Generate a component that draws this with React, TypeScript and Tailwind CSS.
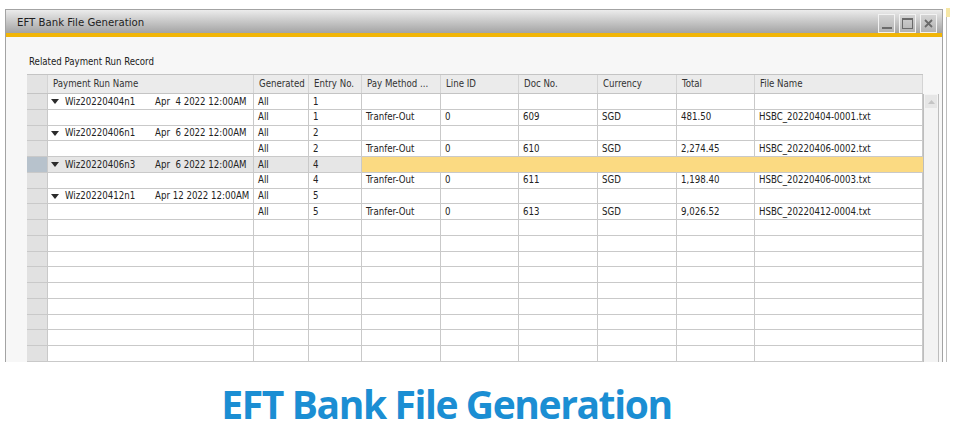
import { clsx } from 'clsx'

type Row = {
  group?: boolean
  name?: string
  date?: string
  gen: string
  entry: string
  method?: string
  line?: string
  doc?: string
  cur?: string
  total?: string
  file?: string
  active?: boolean
}

const ROWS: Row[] = [
  { group: true, name: 'Wiz20220404n1', date: 'Apr  4 2022 12:00AM', gen: 'All', entry: '1' },
  { gen: 'All', entry: '1', method: 'Tranfer-Out', line: '0', doc: '609', cur: 'SGD', total: '481.50', file: 'HSBC_20220404-0001.txt' },
  { group: true, name: 'Wiz20220406n1', date: 'Apr  6 2022 12:00AM', gen: 'All', entry: '2' },
  { gen: 'All', entry: '2', method: 'Tranfer-Out', line: '0', doc: '610', cur: 'SGD', total: '2,274.45', file: 'HSBC_20220406-0002.txt' },
  { group: true, name: 'Wiz20220406n3', date: 'Apr  6 2022 12:00AM', gen: 'All', entry: '4', active: true },
  { gen: 'All', entry: '4', method: 'Tranfer-Out', line: '0', doc: '611', cur: 'SGD', total: '1,198.40', file: 'HSBC_20220406-0003.txt' },
  { group: true, name: 'Wiz20220412n1', date: 'Apr 12 2022 12:00AM', gen: 'All', entry: '5' },
  { gen: 'All', entry: '5', method: 'Tranfer-Out', line: '0', doc: '613', cur: 'SGD', total: '9,026.52', file: 'HSBC_20220412-0004.txt' },
]

const EMPTY_ROWS = 9

function Caret() {
  return (
    <svg width="8" height="5" viewBox="0 0 8 5" className="shrink-0">
      <polygon points="0,0 8,0 4,5" fill="#2b2b2b" />
    </svg>
  )
}

function Cell({ w, children, tone = 'white' }: { w: string; children?: React.ReactNode; tone?: 'white' | 'gray' | 'yellow' }) {
  return (
    <div
      className={clsx(
        'h-full flex items-center pl-[4px] pt-[1px] border-r overflow-hidden whitespace-pre shrink-0',
        w,
        tone === 'white' && 'bg-white border-[#c9c9c9]',
        tone === 'gray' && 'bg-[#e6e6e6] border-[#c9c9c9]',
        tone === 'yellow' && 'bg-[#fbda82] border-[#fbda82]'
      )}
    >
      {children}
    </div>
  )
}

function DataRow({ row }: { row?: Row }) {
  const act = row?.active
  const soft = act ? 'gray' : 'white'
  const rest = act ? 'yellow' : 'white'
  return (
    <div className="flex h-[15.75px] border-b border-[#c9c9c9]">
      <div className={clsx('w-[21px] h-full shrink-0 border-r border-[#c9c9c9]', act ? 'bg-[#b7c2cc]' : 'bg-[#e1e1e1]')} />
      <Cell w="w-[206px]" tone={soft}>
        {row?.group && (
          <div className="flex items-center -ml-[1px]">
            <Caret />
            <span className="ml-[6px] w-[90px]">{row.name}</span>
            <span>{row.date}</span>
          </div>
        )}
      </Cell>
      <Cell w="w-[55px]" tone={soft}>{row?.gen}</Cell>
      <Cell w="w-[53px]" tone={soft}>{row?.entry}</Cell>
      <Cell w="w-[79px]" tone={rest}>{row?.method}</Cell>
      <Cell w="w-[78px]" tone={rest}>{row?.line}</Cell>
      <Cell w="w-[79px]" tone={rest}>{row?.doc}</Cell>
      <Cell w="w-[79px]" tone={rest}>{row?.cur}</Cell>
      <Cell w="w-[78px]" tone={rest}>{row?.total}</Cell>
      <Cell w="w-[168px]" tone={rest}>{row?.file}</Cell>
    </div>
  )
}

const HEADERS: [string, string][] = [
  ['Payment Run Name', 'w-[206px]'],
  ['Generated', 'w-[55px]'],
  ['Entry No.', 'w-[53px]'],
  ['Pay Method ...', 'w-[79px]'],
  ['Line ID', 'w-[78px]'],
  ['Doc No.', 'w-[79px]'],
  ['Currency', 'w-[79px]'],
  ['Total', 'w-[78px]'],
  ['File Name', 'w-[168px]'],
]

function WinButton({ children }: { children: React.ReactNode }) {
  return (
    <div className="w-[17px] h-[19px] border border-[#f2f2f2] bg-gradient-to-b from-[#d4d4d4] to-[#b2b2b2] flex items-center justify-center">
      {children}
    </div>
  )
}

export default function App() {
  return (
    <div className="w-[957px] h-[442px] bg-white overflow-hidden font-['DejaVu_Sans_Condensed','DejaVu_Sans',sans-serif] text-[#222]">
      <div className="flex pt-[8px]">
        <div className="ml-[5px] mt-[1px] w-[938px] h-[353px] border-l border-t border-r border-[#a3a3a3] flex flex-col">
          {/* title bar */}
          <div className="h-[23px] bg-gradient-to-b from-[#ececec] to-[#a4a4a4] flex items-center justify-between pl-[11px] pr-[5px]">
            <span className="text-[11.3px] text-[#1e1e1e] mt-[4px]">EFT Bank File Generation</span>
            <div className="flex gap-[4px] mt-[3px]">
              <WinButton>
                <div className="w-[10px] h-[2px] bg-[#6a6a6a] mt-[10px]" />
              </WinButton>
              <WinButton>
                <div className="w-[11px] h-[11px] border border-[#6a6a6a] border-t-2" />
              </WinButton>
              <WinButton>
                <svg width="9" height="9" viewBox="0 0 9 9">
                  <path d="M1 1 L8 8 M8 1 L1 8" stroke="#6a6a6a" strokeWidth="1.8" />
                </svg>
              </WinButton>
            </div>
          </div>
          <div className="h-[4px] bg-[#f1b507]" />

          {/* body */}
          <div className="flex-1 bg-[#f7f7f7] pl-[21px] min-h-0 overflow-hidden">
            <div className="h-[37px] pt-[18px] pl-[2px] text-[9.6px]">Related Payment Run Record</div>
            <div className="flex text-[9.6px]">
              <div className="w-[896px] shrink-0">
                <div className="flex h-[20px] border-t border-b border-[#c4c4c4] bg-[#ebebeb]">
                  <div className="w-[21px] h-full border-r border-[#d4d4d4] bg-[#e3e3e3]" />
                  {HEADERS.map(([label, w]) => (
                    <div key={label} className={clsx('h-full flex items-center pl-[5px] border-r border-[#d4d4d4] text-[#333]', w)}>
                      {label}
                    </div>
                  ))}
                </div>
                {ROWS.map((r, i) => (
                  <DataRow key={i} row={r} />
                ))}
                {Array.from({ length: EMPTY_ROWS }).map((_, i) => (
                  <DataRow key={`e${i}`} />
                ))}
              </div>
              <div className="w-[16px] shrink-0 flex flex-col">
                <div className="h-[20px]" />
                <div className="flex-1 h-[300px] bg-[#f3f3f3] border-l border-r border-[#bdbdbd] pt-[1px] px-[1px]">
                  <div className="h-[13px] bg-[#e6e6e6] flex items-center justify-center">
                    <svg width="7" height="4" viewBox="0 0 7 4">
                      <polygon points="0,4 7,4 3.5,0" fill="#c4c4c4" />
                    </svg>
                  </div>
                </div>
              </div>
            </div>
          </div>
        </div>
        <div className="ml-[3px] w-[2px] h-[354px] flex flex-col">
          <div className="h-[9px] w-[4px] bg-[#f6e7a6]" />
          <div className="flex-1 w-px bg-[#bdbdbd]" />
        </div>
      </div>

      <div className="mt-[21px] pr-[64px] text-center text-[#1b8ed3] font-['Open_Sans',sans-serif] font-bold text-[39px] leading-[42px] tracking-[-1.4px]">
        EFT Bank File Generation
      </div>
    </div>
  )
}
